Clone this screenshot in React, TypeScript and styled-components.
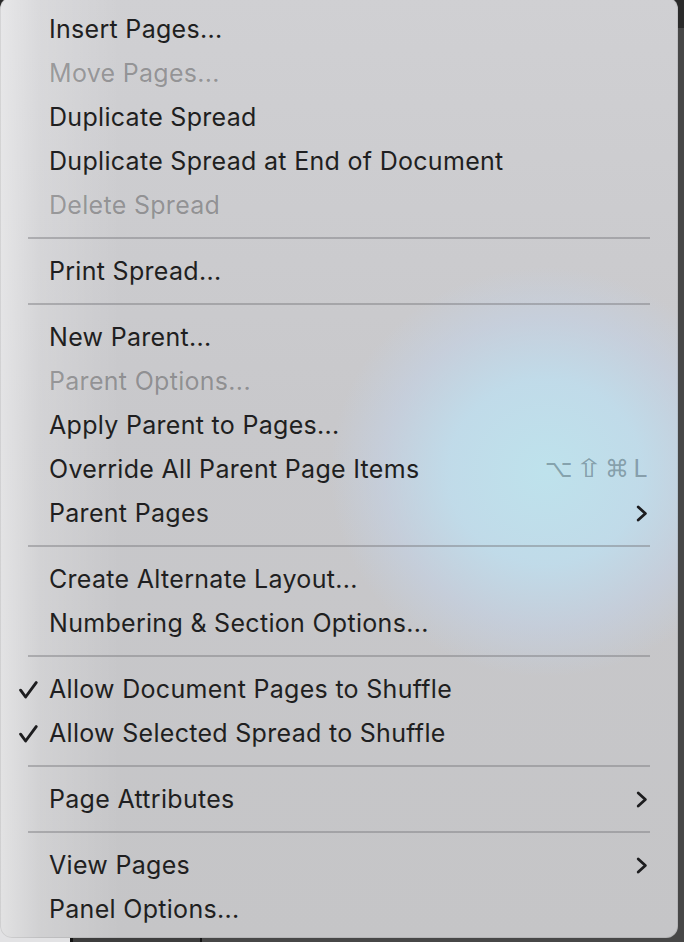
import React from 'react';
import styled, { createGlobalStyle } from 'styled-components';

const GlobalStyle = createGlobalStyle`
  html, body {
    margin: 0;
    height: 942px;
    overflow: hidden;
  }

  body {
    background:
      linear-gradient(to bottom, #2a2a2a 0, #2a2a2a 28px, transparent 28px),
      linear-gradient(
        to right,
        #e2e2e4 0,
        #e2e2e4 70px,
        #141414 70px,
        #141414 73px,
        #3d3d3d 73px,
        #3d3d3d 200px,
        #141414 200px,
        #141414 202px,
        #474747 202px
      );
    font-family: Inter, 'Liberation Sans', sans-serif;
  }
`;

interface MenuEntry {
  label?: string;
  disabled?: boolean;
  checked?: boolean;
  shortcut?: string[];
  submenu?: boolean;
  separator?: boolean;
}

const entries: MenuEntry[] = [
  { label: 'Insert Pages...' },
  { label: 'Move Pages...', disabled: true },
  { label: 'Duplicate Spread' },
  { label: 'Duplicate Spread at End of Document' },
  { label: 'Delete Spread', disabled: true },
  { separator: true },
  { label: 'Print Spread...' },
  { separator: true },
  { label: 'New Parent...' },
  { label: 'Parent Options...', disabled: true },
  { label: 'Apply Parent to Pages...' },
  { label: 'Override All Parent Page Items', shortcut: ['⌥', '⇧', '⌘', 'L'] },
  { label: 'Parent Pages', submenu: true },
  { separator: true },
  { label: 'Create Alternate Layout...' },
  { label: 'Numbering & Section Options...' },
  { separator: true },
  { label: 'Allow Document Pages to Shuffle', checked: true },
  { label: 'Allow Selected Spread to Shuffle', checked: true },
  { separator: true },
  { label: 'Page Attributes', submenu: true },
  { separator: true },
  { label: 'View Pages', submenu: true },
  { label: 'Panel Options...' },
];

const CheckIcon = () => (
  <svg width='19' height='18' viewBox='0 0 19 18' fill='none'>
    <path
      d='M1.6 9.2 L6.6 16 L17.2 1.6'
      stroke='#1d1d1f'
      strokeWidth='2.9'
      strokeLinecap='round'
      strokeLinejoin='round'
    />
  </svg>
);

const ChevronIcon = () => (
  <svg width='12' height='17' viewBox='0 0 12 17' fill='none'>
    <path
      d='M2.2 2 L9.4 8.5 L2.2 15'
      stroke='#1d1d1f'
      strokeWidth='2.8'
      strokeLinecap='round'
      strokeLinejoin='round'
    />
  </svg>
);

const App = () => {
  return (
    <>
      <GlobalStyle />
      <Menu>
        {entries.map((entry, i) =>
          entry.separator ? (
            <Separator key={i} />
          ) : (
            <Item key={i} disabled={entry.disabled}>
              <CheckSlot>{entry.checked && <CheckIcon />}</CheckSlot>
              <Label>{entry.label}</Label>
              {entry.shortcut && (
                <Shortcut>
                  {entry.shortcut.map((key) => (
                    <Key key={key} wide={key === '⇧'}>
                      {key}
                    </Key>
                  ))}
                </Shortcut>
              )}
              {entry.submenu && (
                <ChevronSlot>
                  <ChevronIcon />
                </ChevronSlot>
              )}
            </Item>
          )
        )}
      </Menu>
    </>
  );
};

export default App;

const Menu = styled.div`
  display: flex;
  flex-direction: column;

  width: 678px;
  height: 941px;
  box-sizing: border-box;
  margin-top: -3px;
  padding: 10px 0 7px;

  border-radius: 12px;
  box-shadow: inset 0 0 0 1px rgba(0, 0, 0, 0.08);

  background:
    radial-gradient(
      ellipse 215px 205px at 545px 475px,
      rgba(190, 226, 236, 1) 0,
      rgba(191, 222, 238, 0.85) 45%,
      rgba(195, 212, 234, 0.5) 75%,
      rgba(200, 205, 215, 0) 100%
    ),
    linear-gradient(
      to right,
      rgba(255, 255, 255, 0.5) 0,
      rgba(255, 255, 255, 0.2) 40px,
      rgba(255, 255, 255, 0) 120px
    ),
    linear-gradient(to bottom, #d0d0d3 0, #c8c8cb 45%, #c5c5c7 100%);
`;

const Item = styled.div<{ disabled?: boolean }>`
  display: flex;
  align-items: center;
  flex-shrink: 0;

  height: 44px;
  padding: 0 31px 0 19px;

  color: ${(props) => (props.disabled ? 'rgba(0, 0, 0, 0.3)' : '#1f1f21')};
  font-size: 25px;
  font-weight: 400;
  letter-spacing: 0.3px;
`;

const CheckSlot = styled.span`
  display: flex;
  align-items: center;

  width: 30px;
  margin-top: 1px;
`;

const Label = styled.span`
  flex-grow: 1;
  margin-top: -1px;
  white-space: nowrap;
`;

const Shortcut = styled.span`
  display: flex;
  align-items: center;
  gap: 4px;

  color: rgba(40, 60, 70, 0.4);
  font-family: 'DejaVu Sans', Inter, sans-serif;
  font-size: 24px;
`;

const Key = styled.span<{ wide?: boolean }>`
  display: inline-block;
  transform: ${(props) => (props.wide ? 'scale(1.45, 1.05)' : 'none')};
  margin: ${(props) => (props.wide ? '0 2px' : '0')};
`;

const ChevronSlot = styled.span`
  display: flex;
  align-items: center;
  margin-right: -1px;
`;

const Separator = styled.div`
  flex-shrink: 0;

  height: 2px;
  margin: 10px 28px;

  background: rgba(120, 120, 125, 0.45);
`;
